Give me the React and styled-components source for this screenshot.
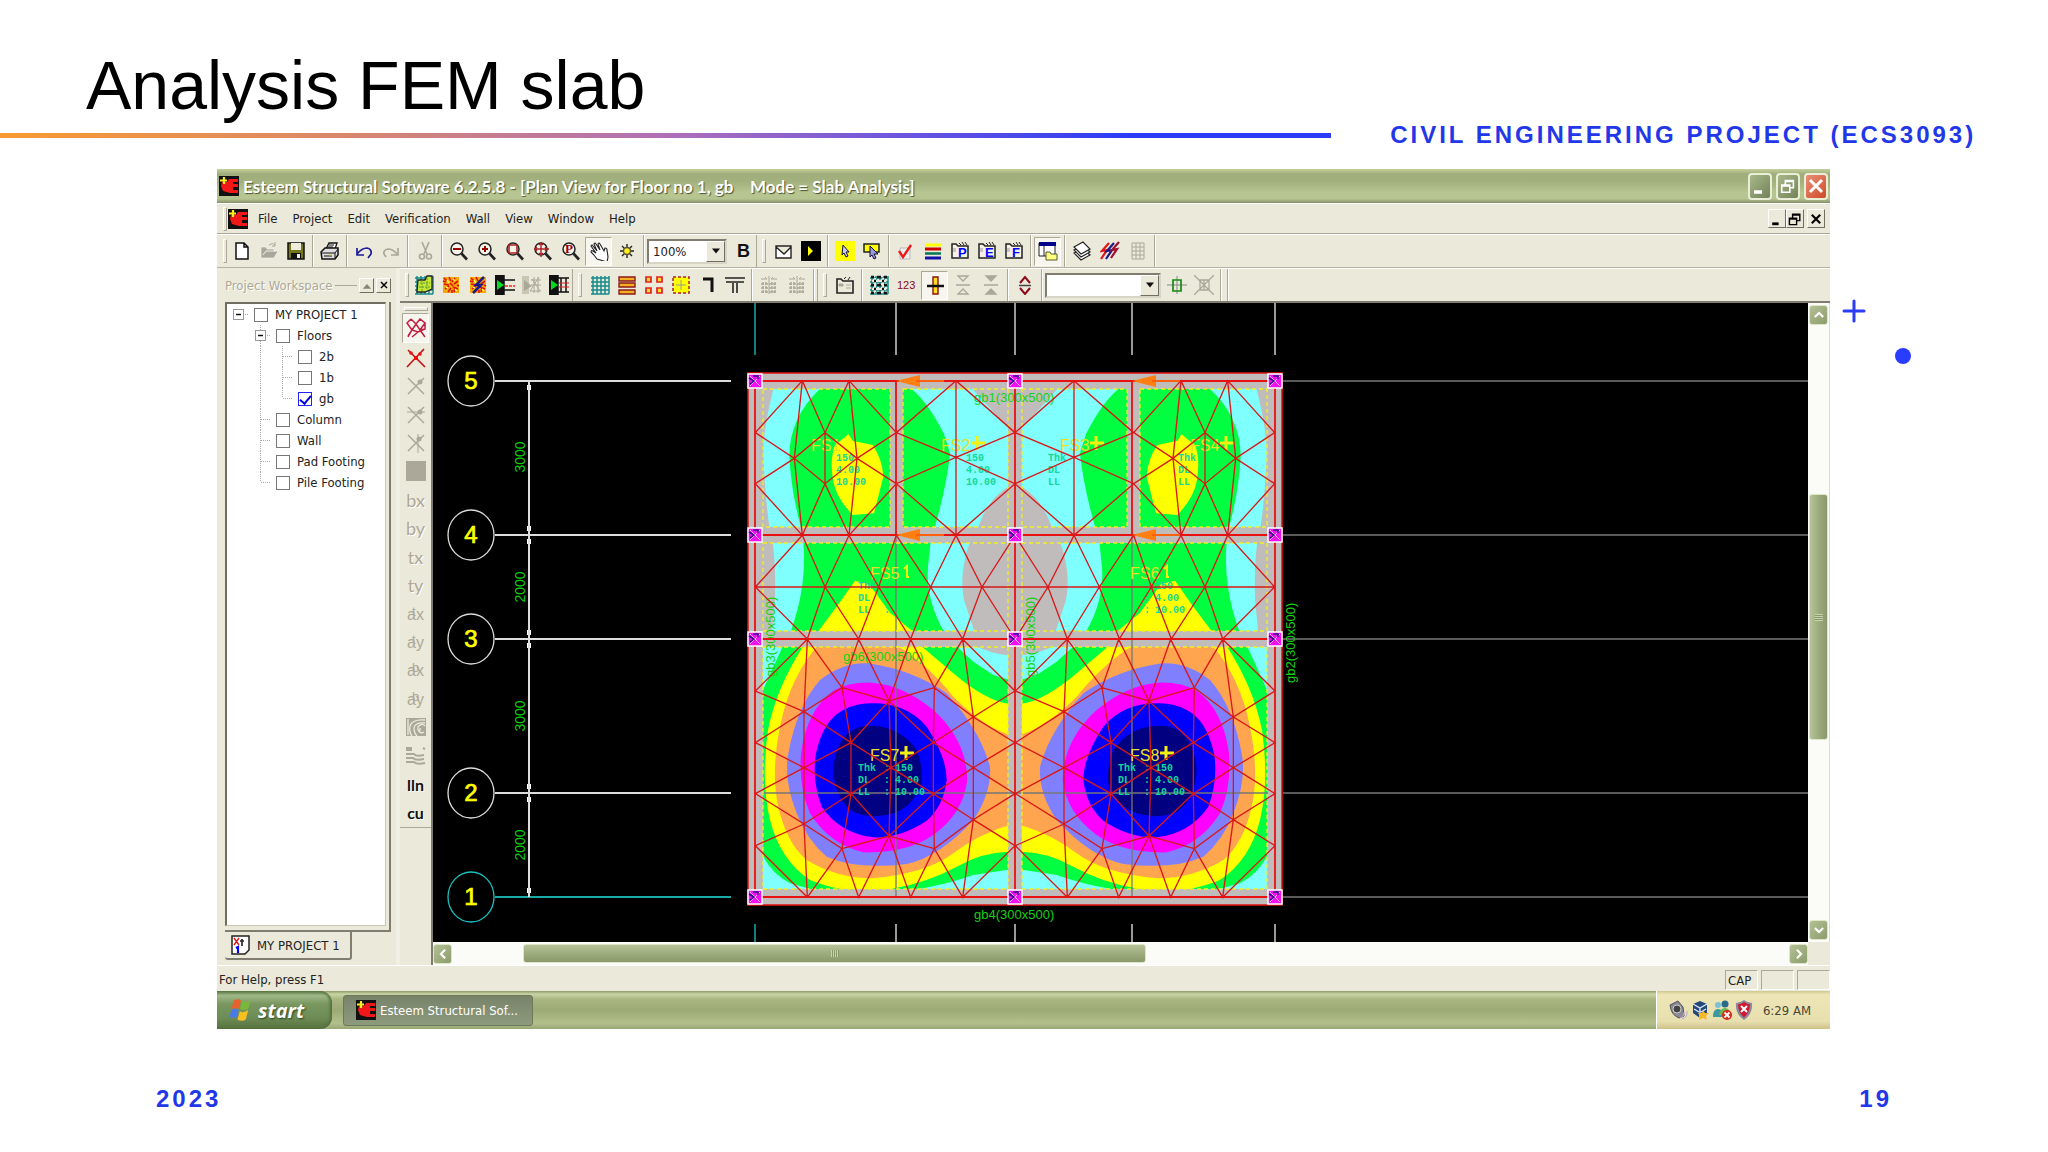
import React, { useState } from "react";
import styled, { createGlobalStyle, css } from "styled-components";

const GlobalStyle = createGlobalStyle`
  * {
    box-sizing: border-box;
  }
  body {
    margin: 0;
    background: #fff;
    font-family: "Liberation Sans", Arial, sans-serif;
  }
  button {
    font: inherit;
    color: inherit;
    padding: 0;
    border: none;
    background: none;
  }
  svg {
    display: block;
  }
`;

const GREY = "#aca899";

/* ---------- icons ---------- */

const glass = (
  <>
    <circle cx="8" cy="8" r="6" fill="#f6f4ea" stroke="#222" strokeWidth="1.5" />
    <path d="M12.5 12.5L18 18.5" stroke="#222" strokeWidth="2.6" />
  </>
);

const notebook = (letter) => (
  <>
    <path d="M2 17V3h4l2 2h10v12z" fill="#f4f2e4" stroke="#222" strokeWidth="1.5" />
    <path d="M9 2l2 2M12 1l2 3M15 1l2 3" stroke="#222" />
    <path d="M3 8h3M3 10h3" stroke="#999" />
    <text x="8" y="16" fontSize="13" fontWeight="bold" fill="#00f" fontFamily="Liberation Sans">
      {letter}
    </text>
  </>
);

const grid = (color) => (
  <path
    d="M3 1v18M7 1v18M11 1v18M15 1v18M19 1v18M1 3h18M1 7h18M1 11h18M1 15h18M1 19h18"
    stroke={color}
    strokeWidth="1.5"
  />
);

const fire = (
  <>
    <path d="M2 2h16v16H2z" fill="#f5a800" />
    <path
      d="M3 3l3 3M8 2l2 4M14 3l-3 4M17 6l-4 3M3 9l5 1M4 14l4-3M7 17l3-4M13 17l1-5M17 14l-5-2M9 8l3 3M2 6l3 1M16 10l2 1M11 15v3"
      stroke="#e01010"
      strokeWidth="1.6"
    />
    <path d="M6 5l2 3M12 4l2 2M5 12l2 1M14 14l2 2" stroke="#ff5" strokeWidth="1.5" />
  </>
);

const distribution = (
  <>
    <path d="M2 4h6l-2-2M18 4h-6l2-2M10 1v18" stroke={GREY} fill="none" />
    <path
      d="M2 9h16M2 13h16M2 17h16M4 7v12M7 7v12M13 7v12M16 7v12"
      stroke={GREY}
      strokeWidth="1.5"
      strokeDasharray="3 1"
    />
  </>
);

const member = (x, letter) => (
  <g fill={GREY} fontFamily="Liberation Sans">
    <text x="1" y="16" fontSize="16">
      a{x}
    </text>
    <text x="6" y="12" fontSize="13">
      {letter}
    </text>
  </g>
);

const crossing = (dots) => (
  <>
    <path d="M2 2l16 16M18 2L2 18" stroke={GREY} strokeWidth="1.5" />
    {dots}
  </>
);

const icons = {
  app: (
    <>
      <path d="M0 0h20v20H0z" fill="#111" />
      <path d="M3 6l5 0 2-3h9v3h-5v2h5v3h-5v3h5v3h-8L4 15 2 10z" fill="#f01818" />
      <path d="M5 1v7M1 4.500h7" stroke="#ffef20" strokeWidth="2.2" />
    </>
  ),
  fresh: <path d="M4 2h8l4 4v12H4zM12 2v4h4" fill="#fff" stroke="#111" strokeWidth="1.5" />,
  open: (
    <>
      <path d="M2 16V6h5l1 2h7v2h4l-4 7H2z" fill={GREY} stroke="#fff" strokeWidth=".5" />
      <path d="M4 14l3-4h10" stroke="#eee" fill="none" />
      <path d="M10 4q4-3 6 0M16 1v4h-3" stroke={GREY} fill="none" />
    </>
  ),
  save: (
    <>
      <path d="M2 2h16v16H2z" fill="#75751a" stroke="#111" strokeWidth="1.5" />
      <path d="M5 2h10v7H5z" fill="#eeecdc" />
      <path d="M5 12h10v6H5z" fill="#111" />
      <path d="M11 13h3v4h-3z" fill="#eee" />
    </>
  ),
  print: (
    <>
      <path d="M6 8l3-6h8l-2 6z" fill="#fff" stroke="#111" strokeWidth="1.3" />
      <path d="M1 11l4-4h13v7l-3 4H2z" fill="#ddd" stroke="#111" strokeWidth="1.5" />
      <path d="M2 12h13v5M15 12l3-4M4 15h8M9 4h5M8 6h5" stroke="#111" fill="none" />
      <path d="M9 14h3" stroke="#cc0" />
    </>
  ),
  undo: (
    <path d="M3 7v7h7M3 13q5-6 10-6 5 1 4 6l-3 4" stroke="#1a1a9a" strokeWidth="1.7" fill="none" />
  ),
  redo: (
    <path d="M17 7v7h-7M16 13q-4-5-9-5-5 1-4 5l2 3" stroke={GREY} strokeWidth="1.7" fill="none" />
  ),
  cut: (
    <g stroke={GREY} strokeWidth="1.6" fill="none">
      <path d="M7 1l5 12M14 1L9 13" />
      <circle cx="7" cy="15.500" r="2.500" />
      <circle cx="14" cy="15.500" r="2.500" />
    </g>
  ),
  zoomOut: (
    <>
      {glass}
      <path d="M4 8h8" stroke="#900" strokeWidth="2" />
    </>
  ),
  zoomIn: (
    <>
      {glass}
      <path d="M5 8h6M8 5v6" stroke="#900" strokeWidth="2" />
    </>
  ),
  zoomRect: (
    <>
      {glass}
      <path d="M4 4h8v8H4z" stroke="#a22" strokeWidth="1.6" fill="none" />
    </>
  ),
  zoomAll: (
    <>
      {glass}
      <path
        d="M1 8h15M8 1v15M4 6L2 8l2 2M12 6l2 2-2 2M6 4l2-2 2 2M6 12l2 2 2-2"
        stroke="#a22"
        strokeWidth="1.4"
        fill="none"
      />
    </>
  ),
  zoomPrev: (
    <>
      {glass}
      <text x="4" y="12" fontSize="13" fontWeight="bold" fill="#900" fontFamily="Liberation Serif">
        P
      </text>
    </>
  ),
  hand: (
    <path
      d="M8 18L5 14 2 11q0-2 2-1l3 2-5-7q1-2 2 0l4 5-3-7q1-2 2 0l4 6-2-6q1-2 2 0l4 7 1-3q2 0 2 2l1 7-1 5z"
      fill="#fff"
      stroke="#222"
      strokeWidth="1.1"
    />
  ),
  sun: (
    <>
      <path d="M10 3v14M3 10h14M5 5l10 10M15 5L5 15" stroke="#222" strokeWidth="1.4" />
      <circle cx="10" cy="10" r="3.500" fill="#ffee20" stroke="#553" strokeWidth="1.4" />
    </>
  ),
  bold: (
    <text x="4" y="16" fontSize="18" fontWeight="bold" fontFamily="Liberation Sans" fill="#111">
      B
    </text>
  ),
  mail: (
    <path d="M2 5h15v12H2zM2 6l8 7 7-7" fill="#fff" stroke="#222" strokeWidth="1.4" />
  ),
  play: (
    <>
      <path d="M0 0h20v20H0z" fill="#000" />
      <path d="M7 5l5 5-5 5z" fill="#ff0" />
    </>
  ),
  pick: (
    <>
      <path d="M0 0h20v20H0z" fill="#ff0" />
      <path d="M8 4l6 7-3 0 2 4-2 1-2-4-2 2z" fill="#ccf" stroke="#113" />
    </>
  ),
  pickBox: (
    <>
      <path d="M2 3h15v8H2z" fill="#ff0" stroke="#222" strokeWidth="1.5" />
      <path d="M8 5l8 8-4 0 2 4-2 1-2-4-2 2z" fill="#99d" stroke="#113" />
    </>
  ),
  check: (
    <>
      <path d="M4 7h10v11H4z" fill="#eee" stroke="#bbb" />
      <path d="M3 10l4 6L15 4" stroke="#f01818" strokeWidth="2.400" fill="none" />
    </>
  ),
  bars: (
    <>
      <path d="M2 4h16" stroke="#ff0" strokeWidth="3" />
      <path d="M2 8h16" stroke="#c00" strokeWidth="3" />
      <path d="M2 12.500h16" stroke="#075" strokeWidth="2.500" />
      <path d="M2 17h16" stroke="#11a" strokeWidth="3" />
    </>
  ),
  noteP: notebook("P"),
  noteE: notebook("E"),
  noteF: notebook("F"),
  pane: (
    <>
      <path d="M1 2h16v13H1z" fill="#fff" stroke="#222" />
      <path d="M1 1h17v4H1z" fill="#00008a" />
      <path d="M6 5v10" stroke="#222" />
      <path d="M8 19v-8h4l1 2h6v6z" fill="#ffff80" stroke="#553" />
    </>
  ),
  sheets: (
    <g fill="#fff" stroke="#222" strokeWidth="1.2">
      <path d="M2 12l9-4 7 6-9 5z" />
      <path d="M2 9l9-4 7 6-9 5z" />
      <path d="M2 6l9-5 7 7-9 5z" />
    </g>
  ),
  bolts: (
    <g fill="none" strokeWidth="2.2">
      <path d="M9 2L2 10l5-1-6 9" stroke="#e01818" />
      <path d="M14 2l-7 8 5-1-6 9" stroke="#1a1a8a" />
      <path d="M19 1l-7 8 5-1-6 9" stroke="#a01030" />
    </g>
  ),
  table: <path d="M4 2h12v16H4zM8 2v16M12 2v16M4 6h12M4 10h12M4 14h12" stroke={GREY} fill="none" />,
  meshPoly: (
    <>
      {grid("#178a8a")}
      <path d="M4 5h7l2-4h5v13l-7 3H3z" fill="#c8e838" stroke="#222" strokeWidth="1.3" />
      <path d="M6 8h10M5 12h12M8 5v11M13 3v11" stroke="#5a9a2a" strokeDasharray="2 1" />
    </>
  ),
  fire,
  fireBolt: (
    <>
      {fire}
      <path d="M16 2l-8 8h5l-8 8" stroke="#1a1a8a" strokeWidth="2.500" fill="none" />
    </>
  ),
  beam: (
    <>
      <path d="M0 0h9v20H0zM9 5h11M9 15h11" fill="#111" stroke="#111" strokeWidth="1.5" />
      <path d="M2 5l7 5-7 5z" fill="#0d2" />
      <path d="M10 11h10" stroke="#f22" strokeWidth="1.6" strokeDasharray="3 1" />
    </>
  ),
  beamOff: (
    <>
      <path d="M0 1h7v18H0z" fill="#c9c6b6" />
      <path d="M2 5l8 6-8 5z" fill={GREY} />
      <path d="M10 4l8 12M8 16l9-14M9 5h10M9 10h10M8 16h11M12 2v16M16 2v16" stroke={GREY} />
    </>
  ),
  beamGrid: (
    <>
      <path d="M0 0h9v20H0zM9 3h11M9 17h11M12 3v14M17 3v14" fill="#111" stroke="#111" strokeWidth="1.5" />
      <path d="M2 5l7 5-7 5z" fill="#0d2" />
      <path d="M10 8h10M10 12h10" stroke="#d22" />
    </>
  ),
  tealGrid: grid("#178a8a"),
  slats: (
    <g fill="#f5b020" stroke="#8a1a1a" strokeWidth="1.4">
      <path d="M2 2h16v4H2zM2 8h16v4H2zM2 15h16v4H2z" />
    </g>
  ),
  pads: (
    <g fill="#ffe030" stroke="#e02020" strokeWidth="1.7">
      <path d="M2 2h5v5H2zM13 2h5v5h-5zM2 13h5v5H2zM13 13h5v5h-5z" />
    </g>
  ),
  dashed: (
    <>
      <path d="M2 2h16v16H2z" fill="#ff0" stroke="#a22" strokeWidth="1.5" strokeDasharray="3 2" />
      <path d="M10 5v10M5 10h10" stroke="#999" />
    </>
  ),
  corner: <path d="M5 4h9v13" stroke="#111" strokeWidth="3" fill="none" />,
  tee: <path d="M0 3h20M1 7h18M8 8v10M12 8v10" stroke="#222" strokeWidth="1.6" />,
  dist: distribution,
  folder: (
    <>
      <path d="M2 18V4h4l2 2h10v12z" fill="#eceadb" stroke="#222" strokeWidth="1.6" />
      <path d="M4 9h4v2H4zM11 10h5M11 13h5" fill={GREY} stroke={GREY} />
      <path d="M9 4l2-2M13 5l2-3" stroke="#222" />
    </>
  ),
  nodes: (
    <>
      {grid("#178a8a")}
      <path d="M6 3v14M14 3v14M3 6h14M3 14h14" stroke="#ebe9d9" strokeWidth="2" />
      <path
        d="M2 2h3M8 2h4M15 2h3M2 10h3M8 10h4M15 10h3M2 18h3M8 18h4M15 18h3M5 6h2M13 6h2M5 14h2M13 14h2"
        stroke="#111"
        strokeWidth="2.600"
      />
    </>
  ),
  numbers: (
    <text x="0" y="14" fontSize="11" fontFamily="Liberation Sans" fill="#8a0a1a">
      123
    </text>
  ),
  column: (
    <>
      <path d="M8 2h5v17H8z" fill="#ffdf20" stroke="#8a1010" strokeWidth="1.4" />
      <path d="M2 11h17" stroke="#111" strokeWidth="2.500" />
    </>
  ),
  vOpen: <path d="M5 1h10l-5 5zM3 10h14M5 19h10l-5-5z" stroke={GREY} fill="none" strokeWidth="1.3" />,
  vShut: <path d="M5 1h10l-5 5zM3 10h14M5 19h10l-5-5z" stroke={GREY} fill={GREY} strokeWidth="1.3" />,
  split: (
    <>
      <path d="M5 8l5-6 5 6M5 13l5 6 5-6" stroke="#8a0a1a" strokeWidth="2" fill="none" />
      <path d="M4 10.500h12" stroke="#444" strokeWidth="1.500" />
    </>
  ),
  target: (
    <>
      <path d="M0 10h20M10 1v18" stroke="#888" />
      <path d="M6 5h8v11H6z" stroke="#148a14" strokeWidth="1.7" fill="none" />
    </>
  ),
  targetOff: (
    <path d="M6 5h9v10H6zM0 0l20 20M20 0L0 20M10 5v10" stroke={GREY} fill="none" strokeWidth="1.3" />
  ),
  meshRed: (
    <path
      d="M5 1L1 5l5 7-4 6M5 1l5 5M10 6l4-5 5 4-5 7-4-6zM14 12l5 7M6 12l4-6M6 12l6 2 7-3V5M6 12L2 19M12 14l-6 5M19 11l-5 1"
      stroke="#c02040"
      strokeWidth="1.5"
      fill="none"
    />
  ),
  crossRed: (
    <>
      <path d="M2 2l17 17M18 1L1 19" stroke="#c01818" strokeWidth="1.7" />
      <circle cx="10" cy="10" r="2" fill="#f00" />
      <circle cx="5" cy="5" r="1.800" fill="#e11" />
      <circle cx="14" cy="6" r="1.800" fill="#e11" />
    </>
  ),
  node1: crossing(<circle cx="14" cy="6" r="2.500" fill={GREY} />),
  node2: crossing(
    <>
      <circle cx="14" cy="7" r="2.500" fill={GREY} />
      <path d="M1 7h18" stroke={GREY} />
    </>
  ),
  node3: crossing(
    <>
      <circle cx="13" cy="6" r="2.500" fill={GREY} />
      <path d="M12 1v19" stroke={GREY} />
    </>
  ),
  square: <path d="M0 0h20v20H0z" fill={GREY} />,
  atx: member("x", "t"),
  aty: member("y", "t"),
  abx: member("x", "b"),
  aby: member("y", "b"),
  contour: (
    <>
      <path d="M0 1h20v18H0z" fill={GREY} />
      <path
        d="M19 3Q6 2 4 9q-1 6 2 10M19 6Q9 5 8 11q0 5 3 8M2 2q0 9 0 16M18 15a4 4 0 1 1 1-6M14 11v3"
        stroke="#eceadb"
        fill="none"
        strokeWidth="1.300"
      />
    </>
  ),
  waves: (
    <path
      d="M0 2h6M0 4h6M0 8h8q2 3 10 1M0 12h7q3 3 11 1M0 16h8q3 3 11 1M17 2l2 1"
      stroke={GREY}
      strokeWidth="2"
      fill="none"
    />
  ),
  flag: (
    <>
      <path d="M4 2q4-2 6 0L8 9q-3-1-6 0z" fill="#e8602a" />
      <path d="M11 3q4 1 7-1l-2 7q-3 2-7 0z" fill="#7ab83a" />
      <path d="M2 10q3-2 6 0l-2 7q-3-2-6 0z" fill="#4a7ae8" />
      <path d="M9 11q3 2 7-1l-2 8q-3 2-7 0z" fill="#f5c020" />
    </>
  ),
  tab: (
    <>
      <path d="M1 1h17v14l-4 4H1z" fill="#fff" stroke="#222" strokeWidth="1.5" />
      <path d="M3 3l5 7M8 3L3 10" stroke="#e01818" strokeWidth="1.4" />
      <path d="M11 4v7M9 6h4" stroke="#222" strokeWidth="1.6" />
      <path d="M5 13l2-1v6" stroke="#00f" strokeWidth="2.200" fill="none" />
    </>
  ),
  speaker: (
    <>
      <path d="M2 5l8-4 5 6 1 9-5 2q-8-3-9-13z" fill="#8a8a98" stroke="#555" />
      <circle cx="9" cy="9" r="4" fill="#444" stroke="#ccc" />
      <path d="M16 12q1 4-4 6M19 11q1 6-5 8" stroke="#b9a8d8" fill="none" />
    </>
  ),
  cube: (
    <>
      <path d="M10 1l7 3v9l-7 5-7-5V4z" fill="#24467a" />
      <path d="M3 4l7 4 7-4M10 8v10M4 9l5 3M16 9l-5 3" stroke="#dfe9f5" strokeWidth="1.4" fill="none" />
      <path d="M13 10l2 3 4 0-3 3 1 4-4-2-4 2 1-4-2-3 4 0z" fill="#f5b82a" />
    </>
  ),
  people: (
    <>
      <circle cx="6" cy="5" r="3" fill="#7ac0d8" />
      <path d="M1 17q0-8 5-8t5 8z" fill="#3a98a0" />
      <circle cx="13" cy="4" r="3.500" fill="#2a6a8a" />
      <path d="M7 15q1-7 6-7t6 7z" fill="#6ab858" />
      <circle cx="15" cy="15" r="5" fill="#d82a1a" />
      <path d="M12.500 12.500l5 5M17.500 12.500l-5 5" stroke="#fff" strokeWidth="1.800" />
    </>
  ),
  shield: (
    <>
      <path d="M10 0q4 3 8 3 1 11-8 17Q1 14 2 3q4 0 8-3z" fill="#888aa0" />
      <path d="M10 2q3 2 6 2.500 0 8-6 13-6-5-6-13Q7 4 10 2z" fill="#d01830" />
      <path d="M7 6l6 6M13 6l-6 6" stroke="#fff" strokeWidth="2" />
    </>
  ),
  minimise: <path d="M4 16h8" stroke="currentColor" strokeWidth="3.500" />,
  restore: (
    <path
      d="M3 9h9v8H3zM3 10h9M7 8V4h9v8h-3M7 5h9"
      stroke="currentColor"
      strokeWidth="1.800"
      fill="none"
    />
  ),
  close: <path d="M4 4l12 12M16 4L4 16" stroke="currentColor" strokeWidth="3" />,
  up: <path d="M4 13l6-6 6 6" stroke="#fff" strokeWidth="3" fill="none" />,
  down: <path d="M4 7l6 6 6-6" stroke="#fff" strokeWidth="3" fill="none" />,
  left: <path d="M13 4l-6 6 6 6" stroke="#fff" strokeWidth="3" fill="none" />,
  right: <path d="M7 4l6 6-6 6" stroke="#fff" strokeWidth="3" fill="none" />,
  drop: <path d="M5 7h10l-5 6z" fill="#111" />,
  rise: <path d="M4 14h12l-6-7z" fill="#888576" />,
};

const Icon = ({ name, size = 20 }) => (
  <svg width={size} height={size} viewBox="0 0 20 20" aria-hidden="true">
    {icons[name]}
  </svg>
);

/* ---------- toolbar data ---------- */

const mainTools = [
  { grip: true },
  { tools: ["fresh", "open", "save"] },
  { sep: true },
  { tools: ["print"] },
  { sep: true },
  { tools: ["undo", "redo"] },
  { sep: true },
  { tools: ["cut"] },
  { sep: true },
  { loose: true, tools: ["zoomOut", "zoomIn", "zoomRect", "zoomAll", "zoomPrev", "hand", "sun"] },
  { sep: true },
  { combo: "100%", label: "Zoom" },
  { tools: ["bold"] },
  { brk: true },
  { tools: ["mail", "play"] },
  { sep: true },
  { tools: ["pick", "pickBox"] },
  { sep: true },
  { tools: ["check", "bars", "noteP", "noteE", "noteF"] },
  { sep: true },
  { tools: ["pane"] },
  { sep: true },
  { loose: true, tools: ["sheets", "bolts", "table"] },
  { sep: true },
];

const slabTools = [
  { grip: true },
  { tools: ["meshPoly", "fire", "fireBolt", "beam", "beamOff", "beamGrid"] },
  { brk: true },
  { tools: ["tealGrid", "slats", "pads", "dashed", "corner", "tee"] },
  { sep: true },
  { loose: true, tools: ["dist", "dist"] },
  { sep: true },
  { brk: true },
  { tools: ["folder"] },
  { sep: true },
  { loose: true, tools: ["nodes", "numbers", "column", "vOpen", "vShut"] },
  { sep: true },
  { tools: ["split"] },
  { sep: true },
  { combo: "", label: "Member", wide: true },
  { tools: ["target", "targetOff"] },
  { sep: true },
  { sep: true },
];

const sideTools = [
  "meshRed",
  "crossRed",
  "node1",
  "node2",
  "node3",
  "square",
  { text: "bx" },
  { text: "by" },
  { text: "tx" },
  { text: "ty" },
  "atx",
  "aty",
  "abx",
  "aby",
  "contour",
  "waves",
  { text: "lln", dark: true },
  { text: "cu", dark: true },
];

const pressed = ["hand", "pane", "column", "meshRed"];

const treeRows = [
  { name: "MY PROJECT 1", guides: ["root"] },
  { name: "Floors", guides: ["none", "box"] },
  { name: "2b", guides: ["none", "line", "tee"] },
  { name: "1b", guides: ["none", "line", "tee"] },
  { name: "gb", guides: ["none", "line", "end"] },
  { name: "Column", guides: ["none", "tee"] },
  { name: "Wall", guides: ["none", "tee"] },
  { name: "Pad Footing", guides: ["none", "tee"] },
  { name: "Pile Footing", guides: ["none", "end"] },
];

const guidePaths = {
  none: "",
  root: "M16 10.5h6",
  box: "M11.500 0v21M16 10.500h6",
  line: "M11.500 0v21",
  tee: "M11.500 0v21M12 10.500h11",
  end: "M11.500 0v10M12 10.500h11",
};

/* ---------- plan drawing ---------- */

// meshes are in thirds of a plan unit
const upperMesh =
  "M46 398L187 242L255 398L327 242L469 398L351 475L255 398L163 475L46 398" +
  "M46 551L163 475L255 551L351 475L469 551L327 706L255 551L187 706L46 551" +
  "M187 242L163 475L187 706M327 242L351 475L327 706M255 398V551" +
  "M648 242L469 398L648 472L469 551L648 706L825 551L648 472L825 398ZM648 242V706" +
  "M46 861L187 706L255 861L327 706L416 861L469 706L572 861L648 706L726 861L825 706" +
  "M46 861L202 1017L255 861L356 1017L416 861L512 1017L572 861L668 1017L726 861L825 1017M46 861H825";

const lowerMesh =
  "M202 58L46 213L192 275L46 368L192 443L46 521L192 612L46 677L202 832" +
  "M202 58L192 275V612L202 832M202 58L306 203L192 275L333 368L192 443L333 521L192 612L306 686L202 832" +
  "M306 203L333 368V521L306 686L356 832L447 648L306 686M306 203L356 58L447 243L306 203" +
  "M447 243L333 368L453 443L333 521L447 648L580 521L453 443L580 368L447 243L453 443L447 648" +
  "M447 243L512 58L583 203ZM447 648L512 832L583 686ZM583 203L580 368V521L583 686" +
  "M583 203L668 58L700 291L583 203M700 291L580 368L700 443L580 521L700 599L583 686L668 832L700 599V291" +
  "M668 58L825 213L700 291L825 368L700 443L825 521L700 599L825 677L668 832";

const columns = [755, 896, 1015, 1132, 1275];
const rows = [
  { y: 381, n: 5 },
  { y: 535, n: 4 },
  { y: 639, n: 3 },
  { y: 793, n: 2 },
  { y: 897, n: 1 },
];
const dims = [
  { y: 457, v: "3000" },
  { y: 587, v: "2000" },
  { y: 716, v: "3000" },
  { y: 845, v: "2000" },
];
const panels = [
  [763, 389, 127, 138],
  [903, 389, 105, 138],
  [763, 543, 245, 88],
  [763, 647, 245, 242],
];

const slabs = [
  { n: "FS1", x: 811, y: 451, values: true },
  { n: "FS2", x: 941, y: 451, values: true, plus: true },
  { n: "FS3", x: 1060, y: 451, names: true, plus: true },
  { n: "FS4", x: 1190, y: 451, names: true, plus: true },
  { n: "FS5", x: 870, y: 579, names: true, arrow: true },
  { n: "FS6", x: 1130, y: 579, values: true, arrow: true },
  { n: "FS7", x: 870, y: 761, names: true, values: true, plus: true },
  { n: "FS8", x: 1130, y: 761, names: true, values: true, plus: true },
];

const Contours = () => (
  <g clipPath="url(#panels)">
    <g transform="translate(740 300) scale(.33333)">
      <path d="M105 250Q70 380 70 460Q75 600 90 690H449V250Z" fill="#80ffff" />
      <path d="M245 262Q148 350 148 470Q154 580 185 690H455V262Z" fill="#00ff40" />
      <path
        d="M285 435L312 414L325 402L338 422L398 435Q428 480 430 530L402 640L338 645Q290 595 280 545Q268 480 285 435Z"
        fill="#ff0"
      />
      <path d="M485 262H693L805 385Q812 470 805 560Q740 600 712 690H485Z" fill="#80ffff" />
      <path d="M485 262H508Q560 300 612 402L630 460Q620 560 582 690H485Z" fill="#00ff40" />
      <path d="M98 725Q108 800 105 900L95 1000H705L672 900Q656 820 690 725Z" fill="#80ffff" />
      <path d="M190 725Q202 860 150 1000H615Q556 900 564 800L572 725Z" fill="#00ff40" />
      <path d="M230 1000L290 920L345 842L387 852L450 938L525 1000Z" fill="#ff0" />
    </g>
    <g transform="translate(740 620) scale(.33333)">
      <path d="M60 75H700Q760 104 810 106V812H60Z" fill="#80ffff" />
      <path
        d="M130 75L60 230V690Q90 760 150 790L230 812H500Q600 800 700 765L810 748V180L760 165L700 125L645 75Z"
        fill="#00ff40"
      />
      <path
        d="M192 75Q110 200 84 330Q62 480 90 600Q120 720 210 780Q280 808 340 812H420Q550 795 650 740Q730 695 810 695V252Q740 245 640 160L540 75Z"
        fill="#ff0"
      />
      <path
        d="M235 75Q150 170 120 320Q92 460 115 560Q140 670 200 720Q290 775 400 775Q560 760 640 700Q720 640 810 615V345Q730 320 640 230Q560 130 468 75Z"
        fill="#ffa54f"
      />
      <path
        d="M385 130Q520 150 620 220Q720 330 750 440Q755 520 700 600Q600 710 500 732Q350 750 260 710Q200 660 170 580Q130 480 145 400Q170 260 240 180Q310 125 385 130Z"
        fill="#8080ff"
      />
      <path
        d="M395 188Q490 195 580 270Q680 360 682 480Q670 580 580 645Q500 700 370 697Q270 675 210 580Q175 500 183 400Q200 270 280 212Q330 185 395 188Z"
        fill="#f0f"
      />
      <path
        d="M400 250Q500 250 560 320Q620 410 620 480Q610 560 560 602Q480 655 400 652Q300 640 245 560Q215 480 228 400Q250 300 310 270Q350 248 400 250Z"
        fill="#00f"
      />
      <path
        d="M400 318Q480 320 530 390Q550 440 545 490Q520 560 460 580Q400 600 340 575Q285 540 280 450Q285 370 330 335Q360 315 400 318Z"
        fill="#000080"
      />
    </g>
  </g>
);

const mirror = "translate(2030 0) scale(-1 1)";

const Plan = () => (
  <PlanSvg viewBox="433 303 1375 639" preserveAspectRatio="xMinYMin meet" role="img">
    <defs>
      <clipPath id="panels">
        {panels.map(([x, y, w, h]) => (
          <rect key={`${x}-${y}`} x={x} y={y} width={w} height={h} />
        ))}
      </clipPath>
    </defs>

    {/* grid lines and bubbles */}
    {columns.map((x, i) => (
      <path key={x} d={`M${x} 303V355M${x} 924V942`} stroke={i ? "#ccc" : "#1aa8a8"} strokeWidth="1.500" />
    ))}
    {rows.map(({ y, n }) => (
      <g key={n}>
        <path d={`M1283 ${y}H1808`} stroke="#777" strokeWidth="1.500" />
        <path d={`M495 ${y}H731`} stroke={n === 1 ? "#1aa8a8" : "#ddd"} strokeWidth="1.800" />
        <ellipse
          cx="471"
          cy={y}
          rx="23"
          ry="25"
          fill="none"
          stroke={n === 1 ? "#1ac0c0" : "#ddd"}
          strokeWidth="1.300"
        />
        <text
          x="471"
          y={y + 8}
          textAnchor="middle"
          fontSize="24"
          fill="#ff0"
          stroke="#ff0"
          strokeWidth=".7"
        >
          {n}
        </text>
        {n !== 5 && <path d={`M529 ${y - 9}v5`} stroke="#fff" strokeWidth="4" />}
        {n !== 1 && <path d={`M529 ${y + 4}v5`} stroke="#fff" strokeWidth="4" />}
      </g>
    ))}
    <path d="M529 381V897" stroke="#ddd" strokeWidth="2" />
    {dims.map(({ y, v }) => (
      <text
        key={y}
        transform={`translate(525 ${y}) rotate(-90)`}
        textAnchor="middle"
        fontSize="14"
        fill="#0ad00a"
      >
        {v}
      </text>
    ))}

    <rect x="748" y="373" width="534" height="532" fill="#c0bcbc" stroke="#e01010" strokeWidth="1.500" />
    <Contours />
    <g transform={mirror}>
      <Contours />
    </g>
    <path d="M896 535V897M1132 535V897M763 793H1268" stroke="#777" strokeWidth="1.300" />

    {/* slab edges */}
    <g fill="none" stroke="#f0f020" strokeWidth="1.300" strokeDasharray="4 3">
      {panels.map(([x, y, w, h]) => (
        <g key={`${x}-${y}`}>
          <rect x={x} y={y} width={w} height={h} />
          <rect x={2030 - x - w} y={y} width={w} height={h} />
        </g>
      ))}
    </g>

    {/* labels */}
    <g fill="#14d214" fontSize="13">
      <text x="974" y="402">gb1(300x500)</text>
      <text x="974" y="919">gb4(300x500)</text>
      <text x="843" y="661">gb6(300x500)</text>
      <text transform="translate(775 677) rotate(-90)">gb3(300x500)</text>
      <text transform="translate(1035 677) rotate(-90)">gb5(300x500)</text>
      <text transform="translate(1295 683) rotate(-90)">gb2(300x500)</text>
    </g>
    {slabs.map(({ n, x, y, names, values, plus, arrow }) => (
      <g key={n}>
        <text x={x} y={y} fontSize="16" fill="#e8e020">
          {n}
        </text>
        {plus && <path d={`M${x + 36} ${y - 15}v14M${x + 30} ${y - 8}h14`} stroke="#f5f010" strokeWidth="3" />}
        {arrow && <path d={`M${x + 34} ${y - 10}l3-3v11h2`} fill="none" stroke="#f5f010" strokeWidth="2" />}
        <g fontFamily="Liberation Mono" fontWeight="bold" fontSize="10" fill="#12d89a">
          {names &&
            ["Thk", "DL", "LL"].map((t, i) => (
              <text key={t} x={x - 12} y={y + 10 + i * 12}>
                {t}
              </text>
            ))}
          {values &&
            ["150", "4.00", "10.00"].map((t, i) => (
              <text key={t} x={x + 25} y={y + 10 + i * 12}>
                {t}
              </text>
            ))}
          {y > 500 &&
            [0, 1, 2].map((i) => (
              <text key={i} x={x + 14} y={y + 10 + i * 12}>
                :
              </text>
            ))}
        </g>
      </g>
    ))}

    {/* beams and mesh */}
    <path
      d="M755 381H1275V897H755ZM755 535H1275M755 639H1275M1015 381V897M896 381V535M1132 381V535"
      fill="none"
      stroke="#e81010"
      strokeWidth="1.800"
    />
    <g fill="none" stroke="#d81818" strokeWidth="4">
      <g transform="translate(740 300) scale(.33333)">
        <path d={upperMesh} />
      </g>
      <g transform={`${mirror} translate(740 300) scale(.33333)`}>
        <path d={upperMesh} />
      </g>
      <g transform="translate(740 620) scale(.33333)">
        <path d={lowerMesh} />
      </g>
      <g transform="translate(1000 620) scale(.33333)">
        <path d={lowerMesh} />
      </g>
    </g>
    {[896, 1132].map((x) =>
      [381, 535].map((y) => (
        <g key={`${x}-${y}`}>
          <path d={`M${x} ${y}l24-6v12z`} fill="#ff7f10" />
          <path d={`M${x + 20} ${y}h28`} stroke="#ff6010" strokeWidth="2" />
        </g>
      ))
    )}
    {[755, 1015, 1275].map((x) =>
      [381, 535, 639, 897].map((y) => (
        <g key={`${x}-${y}`}>
          <rect x={x - 7} y={y - 7} width="14" height="14" fill="#f010f0" stroke="#fff" strokeWidth="1.500" />
          <path d={`M${x - 5} ${y - 5}l10 10M${x + 5} ${y - 5}l-10 10`} stroke="#ffb0ff" />
          <path d={`M${x - 6} ${y - 3}l5 3-4 3M${x - 2} ${y - 5}h5v3`} stroke="#30108a" fill="none" strokeWidth="1.500" />
        </g>
      ))
    )}
  </PlanSvg>
);

/* ---------- parts ---------- */

const ToolStrip = ({ items }) =>
  items.map((item, i) => {
    if (item.grip) return <Grip key={i} />;
    if (item.sep) return <Separator key={i} />;
    if (item.brk)
      return (
        <Break key={i}>
          <Grip />
        </Break>
      );
    if (item.label)
      return (
        <Combo key={i} $wide={item.wide}>
          <select aria-label={item.label}>
            <option>{item.combo}</option>
          </select>
          <ComboArrow>
            <Icon name="drop" size={16} />
          </ComboArrow>
        </Combo>
      );
    return (
      <Group key={i} $loose={item.loose}>
        {item.tools.map((name, j) => (
          <Tool key={j} type="button" aria-label={name} $pressed={pressed.includes(name)}>
            <Icon name={name} />
          </Tool>
        ))}
      </Group>
    );
  });

const Tree = () => {
  const [checked, setChecked] = useState(["gb"]);

  const toggle = (name) => {
    setChecked(
      checked.includes(name) ? checked.filter((item) => item !== name) : [...checked, name]
    );
  };

  return (
    <TreeList>
      {treeRows.map(({ name, guides }) => (
        <TreeRow key={name}>
          {guides.map((guide, i) => (
            <svg key={i} width="22" height="21" viewBox="0 0 22 21" aria-hidden="true">
              <path d={guidePaths[guide]} stroke="#aaa" strokeDasharray="1 1" />
              {(guide === "root" || guide === "box") && (
                <>
                  <rect x="6.500" y="5.500" width="10" height="10" fill="#fff" stroke="#999" />
                  <path d="M9 10.500h5" stroke="#111" strokeWidth="1.500" />
                </>
              )}
            </svg>
          ))}
          <label>
            <input type="checkbox" checked={checked.includes(name)} onChange={() => toggle(name)} />
            {name}
          </label>
        </TreeRow>
      ))}
    </TreeList>
  );
};

const App = () => {
  return (
    <Slide>
      <GlobalStyle />
      <Header>
        <h1>Analysis FEM slab</h1>
        <RuleRow>
          <Rule />
          <Accent>CIVIL ENGINEERING PROJECT (ECS3093)</Accent>
        </RuleRow>
      </Header>

      <Content>
        <Window>
          <TitleBar>
            <Icon name="app" />
            <Caption>{"Esteem Structural Software 6.2.5.8 - [Plan View for Floor no 1, gb    Mode = Slab Analysis]"}</Caption>
            <TitleButton type="button" aria-label="Minimise">
              <Icon name="minimise" />
            </TitleButton>
            <TitleButton type="button" aria-label="Restore">
              <Icon name="restore" size={18} />
            </TitleButton>
            <TitleButton type="button" aria-label="Close" $red>
              <Icon name="close" />
            </TitleButton>
          </TitleBar>

          <MenuBar>
            <Grip />
            <Icon name="app" />
            <nav>
              {["File", "Project", "Edit", "Verification", "Wall", "View", "Window", "Help"].map((m) => (
                <button key={m} type="button">
                  {m}
                </button>
              ))}
            </nav>
            <ChildButton type="button" aria-label="Minimise plan">
              <Icon name="minimise" size={16} />
            </ChildButton>
            <ChildButton type="button" aria-label="Restore plan">
              <Icon name="restore" size={16} />
            </ChildButton>
            <ChildButton type="button" aria-label="Close plan" $apart>
              <Icon name="close" size={14} />
            </ChildButton>
          </MenuBar>

          <ToolBar>
            <ToolStrip items={mainTools} />
          </ToolBar>

          <Body>
            <Dock>
              <DockHead>
                <span>Project Workspace</span>
                <hr />
                <ChildButton type="button" aria-label="Expand workspace" $small>
                  <Icon name="rise" size={14} />
                </ChildButton>
                <ChildButton type="button" aria-label="Close workspace" $small>
                  <Icon name="close" size={10} />
                </ChildButton>
              </DockHead>
              <DockFrame>
                <Tree />
              </DockFrame>
              <DockTab type="button">
                <Icon name="tab" />
                MY PROJECT 1
              </DockTab>
            </Dock>

            <Work>
              <ToolBar>
                <ToolStrip items={slabTools} />
              </ToolBar>
              <WorkRow>
                <SideColumn>
                  <SideBar>
                    <Grip $flat />
                    {sideTools.map((tool, i) =>
                      tool.text ? (
                        <SideText key={i} type="button" $dark={tool.dark}>
                          {tool.text}
                        </SideText>
                      ) : (
                        <SideTool key={i} type="button" aria-label={tool} $pressed={pressed.includes(tool)}>
                          <Icon name={tool} />
                        </SideTool>
                      )
                    )}
                  </SideBar>
                </SideColumn>
                <View>
                  <ViewRow>
                    <Plan />
                    <ScrollBar $vertical>
                      <ScrollButton type="button" aria-label="Scroll up">
                        <Icon name="up" size={14} />
                      </ScrollButton>
                      <Space $grow={170} />
                      <Thumb $vertical $grow={244} />
                      <Space $grow={181} />
                      <ScrollButton type="button" aria-label="Scroll down">
                        <Icon name="down" size={14} />
                      </ScrollButton>
                    </ScrollBar>
                  </ViewRow>
                  <ViewRow>
                    <ScrollBar>
                      <ScrollButton type="button" aria-label="Scroll left">
                        <Icon name="left" size={14} />
                      </ScrollButton>
                      <Space $grow={71} />
                      <Thumb $grow={622} />
                      <Space $grow={643} />
                      <ScrollButton type="button" aria-label="Scroll right">
                        <Icon name="right" size={14} />
                      </ScrollButton>
                    </ScrollBar>
                    <ScrollCorner />
                  </ViewRow>
                </View>
              </WorkRow>
            </Work>
          </Body>

          <StatusBar>
            <span>For Help, press F1</span>
            <StatusCell>CAP</StatusCell>
            <StatusCell />
            <StatusCell />
          </StatusBar>

          <TaskBar>
            <StartButton type="button">
              <Icon name="flag" size={24} />
              start
            </StartButton>
            <TaskButton type="button">
              <Icon name="app" />
              Esteem Structural Sof...
            </TaskButton>
            <Tray>
              <Icon name="speaker" />
              <Icon name="cube" />
              <Icon name="people" />
              <Icon name="shield" />
              <time>6:29 AM</time>
            </Tray>
          </TaskBar>
        </Window>

        <Aside>
          <svg width="80" height="80" viewBox="0 0 80 80" aria-hidden="true">
            <path d="M12 2v20M2 12h20" stroke="#2a3cf5" strokeWidth="3" strokeLinecap="round" />
            <circle cx="61" cy="57" r="8" fill="#2a3cff" />
          </svg>
        </Aside>
      </Content>

      <Footer>
        <Accent>2023</Accent>
        <Accent>19</Accent>
      </Footer>
    </Slide>
  );
};

export default App;

/* ---------- slide ---------- */

const Slide = styled.div`
  min-height: 100vh;
  display: flex;
  flex-direction: column;
  background: #fff;
`;

const Header = styled.header`
  padding-top: 47px;
  h1 {
    margin: 0;
    padding-left: 86px;
    font-size: 68px;
    font-weight: normal;
    line-height: 76px;
    color: #000;
  }
`;

const RuleRow = styled.div`
  display: grid;
  grid-template-columns: 65% 1fr;
  column-gap: 59px;
  align-items: center;
`;

const Rule = styled.div`
  height: 5px;
  background: linear-gradient(90deg, #f99a30, #e08a60 22%, #b070b8 50%, #6a55e0 68%, #2a3cf5 85%);
`;

const Accent = styled.span`
  font-size: 24px;
  line-height: 24px;
  font-weight: bold;
  letter-spacing: 3px;
  white-space: nowrap;
  color: #2238e8;
`;

const Content = styled.main`
  display: grid;
  grid-template-columns: 217fr minmax(0, 1613fr) 218fr;
  margin-top: 22px;
`;

const Aside = styled.aside`
  padding: 130px 0 0 12px;
`;

const Footer = styled.footer`
  display: flex;
  justify-content: space-between;
  padding: 58px 156px 20px 156px;
`;

/* ---------- window ---------- */

const Window = styled.section`
  grid-column: 2;
  background: #ebe9d9;
  font-family: "DejaVu Sans Condensed", "DejaVu Sans", sans-serif;
  font-size: 13px;
  color: #222;
`;

const TitleBar = styled.div`
  display: flex;
  align-items: center;
  gap: 4px;
  height: 34px;
  padding: 0 2px;
  background: linear-gradient(#c3d09c, #9fad7a 15%, #a4b27f 40%, #b8c692 70%, #b5c390 88%, #858f68);
`;

const Caption = styled.div`
  flex: 1;
  overflow: hidden;
  white-space: pre;
  font: bold 17px Lato, sans-serif;
  color: #fff;
  text-shadow: 1px 1px 1px #4a5530;
`;

const TitleButton = styled.button`
  display: grid;
  place-items: center;
  width: 24px;
  height: 27px;
  border: 2px solid #e9efd6;
  border-radius: 4px;
  color: #fff;
  background: ${({ $red }) =>
    $red ? "linear-gradient(135deg, #e89078, #d04a28)" : "linear-gradient(135deg, #a8b888, #72835a)"};
`;

const Grip = styled.span`
  flex: none;
  width: ${({ $flat }) => ($flat ? "24px" : "4px")};
  height: ${({ $flat }) => ($flat ? "4px" : "24px")};
  border: 1px solid;
  border-color: #fff #aca899 #aca899 #fff;
`;

const MenuBar = styled.div`
  display: flex;
  align-items: center;
  height: 31px;
  padding: 0 5px 0 6px;
  border-top: 1px solid #fff;
  border-bottom: 1px solid #aca899;
  & > svg {
    margin-left: 1px;
  }
  nav {
    display: flex;
    flex: 1;
    gap: 15px;
    margin-left: 10px;
  }
`;

const ChildButton = styled.button`
  display: grid;
  place-items: center;
  flex: none;
  width: ${({ $small }) => ($small ? "15px" : "18px")};
  height: ${({ $small }) => ($small ? "15px" : "19px")};
  margin-left: ${({ $apart }) => ($apart ? "3px" : "0")};
  border: 1px solid;
  border-color: #fff #716f64 #716f64 #fff;
  background: #ebe9d9;
  color: #000;
`;

const ToolBar = styled.div`
  display: flex;
  align-items: center;
  height: 34px;
  padding-left: 6px;
  border-top: 1px solid #fff;
  border-bottom: 1px solid #b5b2a2;
  overflow: hidden;
  & > ${Grip} {
    margin-right: 1px;
  }
`;

const Group = styled.div`
  display: flex;
  gap: ${({ $loose }) => ($loose ? "1px" : "0")};
`;

const pressedLook = css`
  border: 1px solid;
  border-color: #aca899 #fff #fff #aca899;
  background: #f6f5ee;
`;

const Tool = styled.button`
  display: grid;
  place-items: center;
  width: 27px;
  height: 29px;
  ${({ $pressed }) => $pressed && pressedLook}
`;

const Separator = styled.span`
  flex: none;
  width: 7px;
  height: 32px;
  background: linear-gradient(90deg, transparent 3px, #aca899 3px 4px, #fff 4px 5px, transparent 5px);
`;

const Break = styled.span`
  display: flex;
  align-items: center;
  justify-content: center;
  flex: none;
  width: 14px;
  height: 32px;
  border-left: 1px solid #aca899;
`;

const Combo = styled.div`
  display: flex;
  flex: none;
  width: ${({ $wide }) => ($wide ? "116px" : "80px")};
  height: 25px;
  margin-right: 2px;
  border: 2px solid;
  border-color: #807d70 #d8d5c6 #d8d5c6 #807d70;
  background: #fff;
  select {
    flex: 1;
    min-width: 0;
    padding: 0 4px;
    border: none;
    background: #fff;
    appearance: none;
    font: inherit;
    color: #222;
  }
`;

const ComboArrow = styled.span`
  display: grid;
  place-items: center;
  width: 19px;
  border: 1px solid;
  border-color: #fff #716f64 #716f64 #fff;
  background: #ebe9d9;
`;

const Body = styled.div`
  display: flex;
`;

/* ---------- workspace dock ---------- */

const Dock = styled.div`
  display: flex;
  flex-direction: column;
  width: 183px;
  padding: 0 5px 5px 8px;
  border-right: 4px solid #f1f0e4;
`;

const DockHead = styled.div`
  display: flex;
  align-items: center;
  gap: 2px;
  height: 34px;
  color: #aca899;
  text-shadow: 1px 1px #fff;
  white-space: nowrap;
  hr {
    flex: 1;
    min-width: 0;
    margin: 0;
    border: 0;
    border-top: 1px solid #aca899;
  }
`;

const DockFrame = styled.div`
  flex: 1;
  padding: 0 3px 4px 0;
  border-right: 2px solid #807d70;
  border-bottom: 2px solid #807d70;
`;

const TreeList = styled.ul`
  height: 100%;
  margin: 0;
  padding: 0;
  list-style: none;
  background: #fff;
  border: 1px solid #c9c6b6;
  border-top: 2px solid #716f64;
  border-left: 2px solid #716f64;
`;

const TreeRow = styled.li`
  display: flex;
  height: 21px;
  label {
    display: flex;
    align-items: center;
    gap: 7px;
    margin-left: 5px;
    white-space: nowrap;
  }
  input {
    display: grid;
    place-items: center;
    width: 14px;
    height: 14px;
    margin: 0;
    appearance: none;
    background: #fff;
    border: 1px solid #777;
  }
  input:checked {
    border-color: #22f;
  }
  input:checked::after {
    content: "";
    width: 5px;
    height: 9px;
    border: solid #00d;
    border-width: 0 2px 2px 0;
    transform: rotate(40deg);
  }
`;

const DockTab = styled.button`
  display: flex;
  align-items: center;
  align-self: flex-start;
  gap: 6px;
  height: 28px;
  padding: 0 10px 0 6px;
  border-right: 2px solid #807d70;
  border-bottom: 2px solid #807d70;
  border-radius: 0 0 3px 3px;
  white-space: nowrap;
`;

/* ---------- plan area ---------- */

const Work = styled.div`
  flex: 1;
  min-width: 0;
  & > ${ToolBar} {
    height: 35px;
    padding-left: 5px;
    border-bottom: 2px solid #807d70;
  }
`;

const WorkRow = styled.div`
  display: flex;
`;

const SideColumn = styled.div`
  width: 33px;
  border-right: 2px solid #807d70;
`;

const SideBar = styled.div`
  display: flex;
  flex-direction: column;
  align-items: center;
  height: 525px;
  padding-top: 4px;
  border-bottom: 1px solid #aca899;
  & > ${Grip} {
    margin-bottom: 2px;
  }
`;

const SideTool = styled.button`
  display: grid;
  place-items: center;
  flex: 1;
  width: 27px;
  ${({ $pressed }) => $pressed && pressedLook}
`;

const SideText = styled(SideTool)`
  font: ${({ $dark }) => ($dark ? "bold 16px" : "18px")} Lato, sans-serif;
  color: ${({ $dark }) => ($dark ? "#111" : GREY)};
  text-shadow: 1px 1px #fff;
`;

const View = styled.div`
  flex: 1;
  min-width: 0;
`;

const ViewRow = styled.div`
  display: flex;
`;

const PlanSvg = styled.svg`
  flex: 1;
  min-width: 0;
  height: 639px;
  background: #000;
  font-family: "Liberation Sans", Arial, sans-serif;
`;

const ScrollBar = styled.div`
  display: flex;
  background: #fbfbf8;
  ${({ $vertical }) =>
    $vertical
      ? css`
          flex-direction: column;
          width: 22px;
          padding: 2px 1px;
          border-right: 1px solid #dddbcb;
        `
      : css`
          flex: 1;
          height: 23px;
          padding: 2px 0;
        `}
`;

const ScrollButton = styled.button`
  display: grid;
  place-items: center;
  flex: none;
  width: 19px;
  height: 20px;
  border: 1px solid #dfe6c8;
  border-radius: 3px;
  background: linear-gradient(135deg, #b3c194, #8c9c6c);
`;

const Space = styled.div`
  flex: ${({ $grow }) => $grow};
`;

const Thumb = styled.div`
  flex: ${({ $grow }) => $grow};
  border: 1px solid #dfe6c8;
  border-radius: 3px;
  background: linear-gradient(${({ $vertical }) => ($vertical ? "90deg" : "180deg")}, #b6c398, #98a878 60%, #8a996c);
  display: grid;
  place-items: center;
  &::after {
    content: "";
    width: 8px;
    height: 7px;
    background: repeating-linear-gradient(
      ${({ $vertical }) => ($vertical ? "0deg" : "90deg")},
      #c8d2b0 0 1px,
      #8a986a 1px 2px
    );
  }
`;

const ScrollCorner = styled.div`
  width: 22px;
`;

/* ---------- status and task bars ---------- */

const StatusBar = styled.div`
  display: flex;
  align-items: center;
  gap: 3px;
  height: 26px;
  padding: 3px 0 1px 2px;
  border-top: 1px solid #fff;
  & > span {
    flex: 1;
  }
`;

const StatusCell = styled.div`
  width: 33px;
  height: 20px;
  padding-left: 2px;
  line-height: 19px;
  border: 1px solid;
  border-color: #aca899 #fff #fff #aca899;
`;

const TaskBar = styled.div`
  display: flex;
  align-items: center;
  height: 38px;
  background: linear-gradient(#8b9a68, #c9d4a4 8%, #a9b682 22%, #9caa76 50%, #b3c08c 85%, #98a674);
`;

const StartButton = styled.button`
  display: flex;
  align-items: center;
  gap: 5px;
  width: 115px;
  height: 38px;
  padding-left: 12px;
  border-radius: 0 12px 12px 0;
  background: linear-gradient(#5a7a44, #a0b888 12%, #78965e 35%, #6e8c56 70%, #56723f);
  box-shadow: inset -2px 0 3px #50703c;
  font: italic bold 20px "Open Sans", sans-serif;
  color: #fff;
  text-shadow: 1px 1px 2px #2a4418;
`;

const TaskButton = styled.button`
  display: flex;
  align-items: center;
  gap: 4px;
  width: 190px;
  height: 31px;
  margin-left: 11px;
  padding-left: 12px;
  border: 1px solid #6d7858;
  border-radius: 3px;
  background: linear-gradient(#78846a, #8e9a7c);
  color: #fff;
  white-space: nowrap;
`;

const Tray = styled.div`
  display: flex;
  align-items: center;
  gap: 2px;
  height: 38px;
  margin-left: auto;
  padding: 0 19px 0 11px;
  border-left: 1px solid #fff;
  background: linear-gradient(#d0c890, #efe6b8 10%, #e8dfae 80%, #cfc08a);
  time {
    margin-left: 7px;
    color: #4a4630;
  }
`;
